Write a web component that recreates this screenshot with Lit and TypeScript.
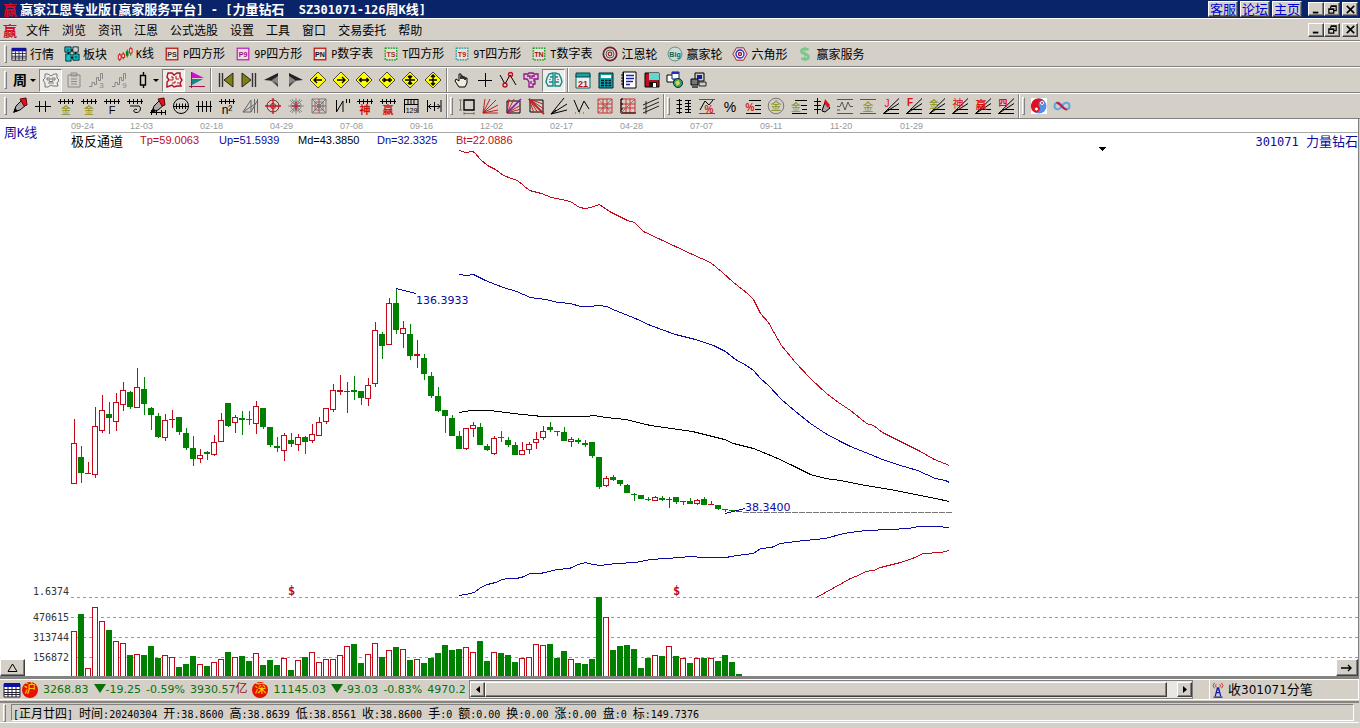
import { LitElement, html, svg, css } from "lit";
import type { SVGTemplateResult, TemplateResult } from "lit";
import { customElement } from "lit/decorators.js";
import { classMap } from "lit/directives/class-map.js";

type Art = SVGTemplateResult | SVGTemplateResult[];

/* ---------- text ---------- */

/** Splits a label so that Latin runs get the narrow fixed-width face. */
const mix = (s: string): TemplateResult[] =>
  s
    .split(/([\u3000-\u9fff]+)/)
    .filter(Boolean)
    .map((p) => (/[\u3000-\u9fff]/.test(p) ? html`<span>${p}</span>` : html`<span class="latin">${p}</span>`));

/* ---------- icon drawing helpers (18 x 18 grid) ---------- */

const ln = (d: string, c = "#000", w = 1) => svg`<path d=${d} fill="none" stroke=${c} stroke-width=${w}></path>`;
const fl = (d: string, c = "#000", s = "none") => svg`<path d=${d} fill=${c} stroke=${s}></path>`;
const ci = (x: number, y: number, r: number, c = "#000", f = "none", w = 1) =>
  svg`<circle cx=${x} cy=${y} r=${r} fill=${f} stroke=${c} stroke-width=${w}></circle>`;
const tx = (x: number, y: number, s: string, c: string, size = 10, bold = false) =>
  svg`<text x=${x} y=${y} fill=${c} font-size=${size} font-weight=${bold ? 700 : 400} text-anchor="middle"
    font-family="'Liberation Sans','Noto Sans CJK SC',sans-serif">${s}</text>`;

const rail = ln("M1 4.5H17M3.5 2V7M7.5 2V7M11.5 2V7M15.5 2V7");
const fan = ln("M1.5 16.5L17 1.5M1.5 16.5L17 6.5M1.5 16.5H17M5 12.5H17");
const pen = [
  fl("M3 15L5 9L11 3L15 8L9 13Z", "#aaa", "#000"),
  fl("M9 2L15 1L16 8L13 9Z", "#e01020", "#600"),
  fl("M2 16L4 11L7 14Z"),
];
const miniPen = [fl("M9 14L12 5L17 11L12 15Z", "#aaa", "#000"), fl("M12 2L17 8L15 11L11 6Z", "#e01020")];
const box4 = (label: string, edge: string, ink: string, dash = "none") => [
  svg`<rect x="2.5" y="2.5" width="13" height="13" fill="#e6e2da" stroke=${edge} stroke-width="1.4" stroke-dasharray=${dash}></rect>`,
  tx(9, 12.5, label, ink, 8, true),
];
const diamond = (arrow: string) => [
  fl("M9 1L17 9L9 17L1 9Z", "#ffff00", "#444"),
  ln(arrow, "#000", 1.4),
];
const grid = ln("M2 2H16V16H2ZM7 2V16M11 2V16M2 7H16M2 11H16", "#c33");
const steps = (n: string) => [
  ln("M1 15.5H4V11.5H6.5V13.5H8.5V6.5H10.5V9.5H12.5V2.5H14.5V8", "#888"),
  tx(13.5, 17, n, "#888", 8),
];

const icons: Record<string, Art> = {
  quote: [fl("M1 3H17V16H1Z", "#fff", "#223"), fl("M1 2H17V6H1Z", "#1010a0"), ln("M1 8.5H17M1 11.5H17M1 13.5H17M5 6V16M9 6V16M13 6V16", "#223")],
  blocks: [
    ["M1 1H8V7H1Z", "#10c8c8"], ["M10 1H16V7H10Z", "#d4d0c8"], ["M2 9H8V17H2Z", "#10c8c8"], ["M10 9H17V16H10Z", "#10c8c8"],
  ].map(([d, c]) => fl(d, c, "#023")).concat([fl("M3 3H6V6H3ZM12 11H15V14H12Z", "#078"), ln("M8 5H10M13 7V9M8 13H10M5 7V9", "#000", 2)]),
  kline: [ln("M3 8V17M7 7V15", "#c00"), fl("M1.5 10H4.5V15H1.5Z", "#fdd", "#c00"), fl("M5.5 9H8.5V13H5.5Z", "#fdd", "#c00"), ln("M11.5 4V13M15.5 1V11", "#0a6a0a"), fl("M10 6H13V11H10Z", "#080"), fl("M14 3H17V8H14Z", "#fdd", "#c00")],
  ps: box4("PS", "#c01010", "#333"),
  p9: box4("P9", "#c020c0", "#a0108a"),
  pn: box4("PN", "#c01010", "#111"),
  ts: box4("TS", "#00a010", "#a03020", "2 1"),
  t9: box4("T9", "#10a0a0", "#c02020", "2 1"),
  tn: box4("TN", "#00a010", "#a01010", "2 1"),
  wheel: [ci(9, 9, 7.5, "#702030", "#e8d8d8", 2), ci(9, 9, 4.5, "#305030"), ci(9, 9, 2, "#903030", "none", 1.4)],
  big: [ci(9, 9, 7.8, "#508878", "#c8dcd8"), tx(9, 12, "Big", "#206050", 8, true)],
  hexagon: [fl("M1 9L5 2H13L17 9L13 16H5Z", "#e8e0e8", "#a01020"), ci(9, 9, 4.5, "#2030c0", "#fff", 1.5), ci(9, 9, 1.7, "#a01040", "none", 1.5)],
  dollar: [ln("M13 4.5C11 2.5 5 2.5 5 6C5 9.500 13 8.500 13 12C13 15.500 7 15.500 5 13.500", "#78c888", 3), ln("M9 1V17", "#78c888", 1.4)],

  week: [tx(9, 14, "周", "#000", 14, true)],
  flower: [ln("M3 3H6L9 5L12 3H15V7L17 9L15 12L16 15H11L9 14L6 16H3V12L1 9L3 7ZM5 7H8V9H5ZM10 7H13V9H10ZM6 12H12M7 10.5H11", "#777")],
  clipboard: [ln("M3 4H15V16H3ZM6 2H12V5H6ZM6 8H12M6 10.5H12M6 13H12", "#888")],
  steps3: steps("3"),
  steps9: steps("9"),
  candle: [ln("M9.5 1V5M9.5 14V17M6.5 4.5H11.5V14H6.5Z", "#000", 1.4)],
  puzzle: [ln("M3 2H7L9 4L12 2H15V6L17 9L15 12L16 15H12L9 16L7 14L2 16V11L4 9L2 6Z", "#b01020", 1.4), ln("M6 6H8V9H5M11 5V8H14M7 12H10V10M12 12H14", "#b01020")],
  flag: [ln("M3.5 1V17M1 15.5H17", "#b01050"), fl("M4 1L16 7H4Z", "#d010c8"), fl("M4 8H15L4 14Z", "#108888")],
  first: [ln("M2.5 2V16M5.5 2V16", "#333", 1.4), fl("M16 2V16L7 9Z", "#808010", "#222")],
  last: [ln("M12.5 2V16M15.5 2V16", "#333", 1.4), fl("M2 2V16L11 9Z", "#808010", "#222")],
  prev: [fl("M15 2V16L8 10Z", "#888"), fl("M15 2L1 9H9L15 5Z", "#222"), fl("M1 9H9L15 16V13L10 10Z", "#444")],
  next: [fl("M3 2V16L10 10Z", "#888"), fl("M3 2L17 9H9L3 5Z", "#222"), fl("M17 9H9L3 16V13L8 10Z", "#444")],
  dLeft: diamond("M13 9H5M8 6L5 9L8 12"),
  dRight: diamond("M5 9H13M10 6L13 9L10 12"),
  dWide: diamond("M4 9H14M6.5 7L4.5 9L6.5 11M11.5 7L13.5 9L11.5 11"),
  dNarrow: diamond("M4 9H14M5.5 7L8 9L5.5 11M12.5 7L10 9L12.5 11"),
  dShort: diamond("M4 9H14M9 4V14M7 5L9 7.5L11 5M7 13L9 10.5L11 13"),
  dTall: diamond("M5 9H13M9 4V14M7 6L9 4L11 6M7 12L9 14L11 12"),
  hand: [fl("M6 16L2 10L3 8L6 10V3H8V8V5H10V8V6H12V9V7H14V12L12 16Z", "#eeeae0", "#000")],
  cross: ln("M9.5 2V16M2 9.5H16"),
  nodes: [ln("M1 4L6 13L11 4L17 14"), ci(6, 14, 2, "#c01020", "none", 1.4), ci(11.5, 3.5, 2, "#c01020", "none", 1.4)],
  knot: [ln("M2 3H6L7 2H11L12 3H16V8H12V10H13V13H11V16H7V11L5 8H2ZM5 5H8V8M13 5H10V8M9 10V13", "#901090", 1.3)],
  brain: [ln("M8 2L4 3L2 7L1 11L3 15H8ZM10 2L14 3L16 7L17 11L15 15H10ZM8 6H5M8 11H4M10 6H13M10 11H14M5 8V9M13 8V9", "#108888", 1.4)],
  calendar: [fl("M2 4H16V17H2Z", "#e8f0f0", "#066"), fl("M2 2H16V6H2Z", "#20a0a0", "#044"), tx(9, 15.5, "21", "#c01020", 9, true)],
  calc: [fl("M2 2H16V17H2Z", "#10a0a8", "#022"), fl("M4 4H14V7H4Z", "#fff"), ln("M4 9.5H14M4 12H14M4 14.5H14", "#012", 1.6), ln("M7.5 8V16M11 8V16", "#10a0a8")],
  notebook: [fl("M3 1H16V17H3Z", "#fff", "#000"), ln("M3.5 1V17M1 4H4M1 7H4M1 10H4M1 13H4", "#000"), ln("M6 4.5H14M6 7.5H14M6 10.5H13M6 13.5H10", "#2020a0", 1.4)],
  floppy: [fl("M2 2H16V16H2Z", "#c01020", "#000"), fl("M6 2H16V9H6Z", "#60d8d0"), fl("M6 11H14V16H6Z", "#111"), fl("M10 12H13V16H10Z", "#fff")],
  globe: [fl("M1 4H8V11H1Z", "#fff", "#000"), fl("M6 1H13V8H6Z", "#fff", "#102080"), fl("M6 1H13V3H6Z", "#2030b0"), ci(12, 12, 4.5, "#033", "#30a070"), fl("M9 11L13 9L14 13L11 15Z", "#e0d040")],
  computers: [fl("M6 2H15V10H6Z", "#ccc", "#000"), fl("M8 4H13V8H8Z", "#1020a0"), fl("M2 8H9V14H2Z", "#777", "#000"), fl("M10 11H17V15H10Z", "#ccc", "#222"), ln("M3 16H9", "#333", 1.6)],

  pen,
  cross2: ln("M1 9.5H17M5.5 4V15M11.5 4V15"),
  railGold: [rail, tx(9, 17, "金", "#909010", 10)],
  railF: [rail, tx(9, 16.5, "F", "#000", 11)],
  railSpiral: [rail, ln("M4 9H13C16 11 14 16 10 15.5C6 15 8 11 11 12.5")],
  penRuler: [...pen, ln("M1 15.5H17M2.5 13V18M7.5 13V18M12.5 13V18M16.5 13V18")],
  circleRuler: [ci(9, 9, 7.5), ln("M1 9.5H17M4.5 6.5V12M7.5 6.5V12M10.5 6.5V12M13.5 6.5V12")],
  cross4: ln("M1 9.5H17M3.5 4V15M7.5 4V15M11.5 4V15M15.5 4V15"),
  railN: [rail, tx(9, 16.5, "n²", "#000", 12)],
  triangles: [ln("M2 15L10 3V15L2 15L14 7M13.5 2V16M16.5 2V16M10 15L16 4", "#666")],
  target: [ci(9, 9, 6, "#702020"), ci(9, 9, 2.5, "#702020"), ln("M9 1V17M1 9H17", "#d01020", 1.3)],
  web: [ln("M3 3L15 15M15 3L3 15M9 1V17M1 9H17M5 2L13 16M13 2L5 16", "#888"), ci(9, 9, 5, "#788"), ln("M9 5V13M5 9H13", "#c02030", 1.4)],
  squareWeb: [ln("M2 2H16V16H2ZM5 5H13V13H5ZM2 2L16 16M16 2L2 16", "#777"), ln("M9 2V16M2 9H16", "#c04040"), fl("M7 7H11V11H7Z", "#777")],
  slope: ln("M3.5 3V15L10 4V15M13.5 2V6M16.5 2V6"),
  railShen: [rail, tx(9, 17, "神", "#d01010", 11, true)],
  railWin: [rail, tx(9, 17, "赢", "#d01010", 11, true)],
  ruler: [ln("M2 2.5H16M2 7.5H16M2.5 2V16M16 2V16M6 3V7M9 3V7M12 3V7"), tx(9.5, 15.5, "129", "#000", 7)],
  span: ln("M2.5 3V15M16 3V15M3 9.5H15M9.5 5V14M6 7L3.5 9.5L6 12M12.5 7L15 9.5L12.5 12"),

  dims: [ln("M6 3H16V13H6Z", "#000", 1.4), ln("M2.5 3V13M1 3H4M1 13H4M6 16.5H16M6 15V18M16 15V18", "#777")],
  redFan: ln("M2 16L4 2M2 16L9 2M2 16L15 3M2 16L17 8M2 16L17 13M2 16H17", "#c02020"),
  boxFan: [ln("M3 4H16V16H3Z"), ln("M3 16L5 2M3 16L10 2M3 16L17 8M3 16L17 12", "#c02020"), ln("M3 16L17 2", "#8020a0", 1.6)],
  boxFan2: [ln("M3 3H16V15H3Z"), ln("M2 2L16 7M2 2L17 12M2 2L7 16M2 2L11 16", "#c02020"), ln("M2 2L17 17", "#c02020", 1.8)],
  blackFan: ln("M1 17L14 1M1 17L17 7M1 17L17 13M1 17L6 13"),
  zigzag: [ln("M1 3L6 15L11 4L16 12"), ln("M2 16H3M6 16H7M10 16H11", "#555")],
  redGrid: [ln("M2 2L16 16M16 2L2 16", "#888"), grid],
  blackGrid: [grid, ln("M2 2V16H17M2 2H4M2 7H4M2 12H4"), ln("M2 16L16 2", "#777")],
  channels: ln("M1 8L17 1M1 12L17 5M1 16L17 9M4 4V17", "#222"),

  levels: ln("M4.5 2V17M1.5 3.5H7M1.5 7.5H7M1.5 11.5H7M1.5 15.5H7M10 3.5H16M10 6.5H16M10 9.5H16M10 12.5H16M10 15.5H16M13.5 3V16"),
  percentCurve: [ln("M1 2.5H17M1 16.5H17", "#d02020"), ln("M2 13L7 4L11 8L15 3", "#000"), tx(11, 15.5, "%", "#d02020", 10, true)],
  percent: tx(9, 14.5, "%", "#000", 14),
  percentLines: [ln("M5 3.5H17M11 8.5H17M11 12.5H17M2 16.5H17"), tx(6, 14, "%", "#d02020", 10, true)],
  goldCircle: [ci(9, 9, 7.8, "#777"), tx(9, 13, "金", "#909010", 11)],
  goldLines: [ln("M5 3.5H17M11 8.5H17M12 12.5H17M2 16.5H17"), tx(6, 14, "金", "#909010", 10)],
  penLevels: [ln("M4.5 1V17M1 4.5H8M1 8.5H8M1 12.5H8"), ...miniPen],
  wave: [ln("M1 2.5H17M1 16.5H17", "#d02020"), ln("M1 9.5H4L6 5L9 13L12 5L14 9.5H17M1 13H4", "#555")],
  goldRed: [ln("M1 2.5H17M1 16.5H17", "#d02020"), tx(9, 14, "金", "#909010", 11)],
  fanJ: [fan, tx(5, 10, "J", "#e01010", 10)],
  fanF: [fan, tx(5, 9, "F", "#e01010", 10, true)],
  fanGold: [fan, tx(6, 11, "金", "#909010", 10)],
  fanShen: [fan, tx(7, 11, "神", "#e01010", 11)],
  fanWin: [fan, tx(7, 12, "赢", "#e01010", 11, true)],
  fanFour: [fan, tx(6, 9, "四", "#e01010", 9, true)],
  yinyang: [fl("M1 1H17V17H1Z", "#fff"), ci(9, 9, 7.5, "none", "#5090e8"), fl("M9 1.5A7.5 7.5 0 0 0 4 15A4 4 0 0 0 9 9A4 4 0 0 1 14 3.5A8 8 0 0 0 9 1.5Z", "#e01020"), ci(6.5, 12, 2, "#e01020", "#fff"), ci(12, 6, 1.5, "#fff", "#e01020")],
  infinity: [ln("M9 9C6 4 1.5 5.5 1.5 9S6 14 9 9", "#60a8e0", 2), ln("M9 9C12 14 16.5 12.5 16.5 9S12 4 9 9", "#60a8e0", 2), ln("M3.5 6C7 5 10 13 14 12.5", "#c02040", 2.2)],
  tower: [ln("M4 17H14M6 16L8.5 6M12 16L9.5 6M7 12H11M8 9H10", "#1818a0", 1.4), ln("M5 1Q2 4 5 7M13 1Q16 4 13 7M7 2.5Q5.5 4 7 6M11 2.5Q12.5 4 11 6", "#c02020")],
  minimize: ln("M3 14H12", "#000", 3),
  restore: [ln("M6 3H15V11H11M6 4V7M6 4H15", "#000", 2), ln("M3 8H11V15H3ZM3 9H11", "#000", 2)],
  close: ln("M3 3L15 15M15 3L3 15", "#000", 2.6),
};

const icon = (name: string, size = "") => html`<svg class="icon ${size}" viewBox="0 0 18 18" aria-hidden="true">${icons[name]}</svg>`;

/* ---------- shared look ---------- */

const base = css`
  * {
    box-sizing: border-box;
  }
  button,
  a {
    font: inherit;
    color: inherit;
    background: none;
    border: 0;
    padding: 0;
    margin: 0;
    text-decoration: none;
    white-space: pre;
  }
  .latin {
    font-family: "DejaVu Sans Mono", monospace;
    font-size: 10px;
  }
  .icon {
    display: block;
    width: 18px;
    height: 18px;
    flex: none;
  }
  .icon.s16 {
    width: 16px;
    height: 16px;
  }
  .icon.s10 {
    width: 11px;
    height: 11px;
  }
  .raised {
    background: #d4d0c8;
    border: 1px solid;
    border-color: #fff #404040 #404040 #fff;
    box-shadow: inset -1px -1px 0 #808080;
  }
`;

/* ---------- chart data ---------- */

const FIRST_X = 71;
const PITCH = 7;
const TOP = 119;

/** rise flag, high, body top, body bottom, low, volume top */
type Bar = [number, number, number, number, number, number];
const bars: Bar[] = [
  [1, 419, 443, 484, 484, 631], [0, 446, 457, 473, 483, 614], [1, 462, 473, 473, 473, 668], [1, 407, 426, 475, 478, 607],
  [1, 395, 410, 431, 433, 621], [0, 402, 414, 418, 434, 630], [1, 393, 402, 422, 431, 641], [1, 382, 390, 405, 411, 643],
  [0, 391, 392, 407, 409, 655], [1, 368, 387, 408, 408, 654], [0, 377, 389, 404, 415, 655], [0, 407, 408, 415, 430, 646],
  [0, 413, 416, 437, 438, 658], [1, 414, 420, 438, 441, 655], [1, 410, 419, 419, 428, 657], [0, 417, 417, 432, 435, 667],
  [0, 428, 433, 448, 450, 664], [0, 436, 448, 459, 466, 656], [1, 449, 455, 459, 463, 664], [0, 451, 452, 454, 460, 666],
  [1, 435, 442, 455, 456, 662], [1, 413, 420, 442, 442, 659], [0, 403, 403, 426, 427, 652], [1, 415, 417, 423, 433, 657],
  [0, 411, 418, 420, 435, 656], [0, 411, 419, 419, 425, 661], [1, 401, 406, 424, 434, 653], [0, 408, 408, 427, 429, 665],
  [0, 427, 427, 445, 447, 660], [0, 437, 446, 448, 452, 665], [1, 433, 435, 451, 461, 658], [0, 433, 440, 444, 447, 670],
  [1, 434, 437, 445, 451, 660], [0, 436, 437, 442, 454, 657], [1, 424, 434, 441, 443, 652], [1, 417, 422, 436, 436, 662],
  [1, 408, 408, 422, 424, 659], [1, 384, 390, 410, 412, 659], [1, 375, 390, 392, 395, 655], [1, 382, 391, 391, 413, 646],
  [0, 376, 390, 392, 400, 644], [0, 391, 391, 398, 405, 663], [1, 378, 385, 399, 406, 654], [1, 322, 330, 384, 387, 643],
  [0, 332, 334, 346, 359, 657], [1, 298, 303, 345, 345, 650], [0, 288, 303, 330, 334, 647], [1, 321, 328, 334, 348, 649],
  [0, 324, 334, 356, 360, 660], [1, 340, 354, 356, 368, 659], [0, 354, 358, 374, 380, 663], [0, 372, 376, 396, 398, 658],
  [0, 387, 396, 411, 412, 653], [0, 410, 410, 416, 433, 645], [0, 415, 418, 436, 436, 650], [0, 431, 436, 449, 449, 649],
  [1, 428, 428, 449, 450, 647], [1, 422, 425, 429, 437, 652], [0, 423, 427, 445, 445, 641], [0, 444, 446, 450, 451, 661],
  [1, 436, 438, 454, 455, 652], [0, 431, 437, 437, 442, 653], [0, 437, 440, 445, 447, 655], [0, 442, 445, 455, 455, 662],
  [1, 442, 450, 455, 455, 658], [1, 442, 444, 450, 454, 657], [1, 432, 439, 443, 449, 644], [1, 426, 431, 438, 440, 645],
  [0, 422, 427, 430, 432, 644], [0, 431, 431, 431, 436, 658], [0, 427, 432, 441, 441, 651], [1, 437, 439, 442, 447, 659],
  [0, 438, 440, 442, 444, 663], [0, 440, 443, 445, 447, 664], [0, 442, 442, 456, 458, 659], [0, 457, 457, 487, 489, 597],
  [1, 476, 478, 486, 487, 617], [0, 475, 477, 480, 481, 650], [0, 480, 480, 484, 486, 646], [0, 484, 485, 493, 493, 645],
  [0, 493, 494, 494, 501, 649], [0, 495, 495, 499, 499, 668], [0, 497, 499, 499, 501, 658], [1, 496, 497, 501, 501, 655],
  [0, 496, 498, 500, 501, 656], [1, 497, 499, 499, 508, 646], [0, 497, 497, 502, 504, 656], [1, 501, 501, 501, 505, 658],
  [0, 498, 501, 504, 504, 663], [1, 499, 500, 504, 505, 658], [0, 497, 499, 505, 505, 658], [1, 501, 504, 504, 505, 658],
  [0, 505, 505, 509, 510, 661], [0, 509, 509, 509, 512, 655], [0, 510, 510, 510, 511, 662], [0, 511, 511, 511, 511, 674],
];

const RED = "#c00a1a";
const BLUE = "#0a0aa0";

const bands: { color: string; points: string }[] = [
  { color: RED, points: "459,150 465,152 472,151 474,152 480,159 487,165 495,169 503,175 511,178 517,180 529,190 541,193 551,197 561,199 570,201 579,207 585,208 590,207 599,204 609,211 627,220 634,222 643,231 660,239 675,246 692,254 710,262 722,272 733,282 742,289 747,293 753,299 760,313 768,322 774,333 781,345 795,362 810,378 826,393 838,402 850,410 860,418 866,423 873,425 882,432 900,441 918,450 934,459 949,465" },
  { color: BLUE, points: "459,274 466,275 473,274 485,280 495,284 503,287 516,291 530,297 545,299 558,302 570,303 580,306 588,306 599,305 606,306 615,310 635,318 650,325 675,334 695,339 713,345 725,351 735,359 746,365 753,370 760,378 768,385 781,399 795,411 810,423 825,433 840,441 850,446 870,454 882,459 900,465 917,470 935,478 945,480 949,482" },
  { color: "#000", points: "459,412 470,410 490,410 505,412 522,414 542,416 586,416 594,415 605,417 625,419 650,425 692,431 712,436 724,439 733,443 753,448 775,457 792,465 810,474 825,478 840,480 865,485 890,489 920,495 935,498 949,501" },
  { color: BLUE, points: "459,595 465,594 474,592 480,587 487,584 495,582 502,579 507,578 516,578 524,576 529,573 540,573 557,569 569,568 578,564 585,562 592,564 600,565 616,563 635,562 650,559 665,558 680,557 690,556 703,557 725,557 737,555 753,553 760,548 771,547 780,543 795,541 825,538 843,533 865,530 890,529 908,528 918,526 935,526 949,527" },
  { color: RED, points: "816,597 834,587 850,578 860,574 865,571 873,570 880,567 900,562 912,558 923,553 940,552 949,550" },
];

const levels: [number, string][] = [[597, "1.6374"], [617, "470615"], [637, "313744"], [657, "156872"]];
const dates = ["09-24", "12-03", "02-18", "04-29", "07-08", "09-16", "12-02", "02-17", "04-28", "07-07", "09-11", "11-20", "01-29"];
const legend: [string, string][] = [
  ["Tp=59.0063", "red"], ["Up=51.5939", "blue"], ["Md=43.3850", "black"], ["Dn=32.3325", "blue"], ["Bt=22.0886", "red"],
];

@customElement("kline-chart")
class KlineChart extends LitElement {
  static styles = [
    base,
    css`
      :host {
        display: block;
        position: relative;
        background: #fff;
        font: 13px/16px "Noto Sans CJK SC", sans-serif;
        border-right: 1px solid #808080;
        border-bottom: 3px solid #868482;
        overflow: hidden;
      }
      .plot {
        position: absolute;
        inset: 0;
        width: 100%;
        height: 100%;
      }
      .head {
        display: grid;
        grid-template-columns: 67px 1fr;
        padding-left: 4px;
      }
      .latin {
        font-size: 12px;
        line-height: 1;
      }
      .name {
        color: #0a0aa0;
        padding-top: 5px;
      }
      .dates {
        display: flex;
        height: 14px;
        border-bottom: 1px solid #a8a8a8;
        font: 9px/15px "Liberation Sans", sans-serif;
        color: #999;
      }
      .dates span {
        width: 70px;
      }
      .dates span:first-child {
        width: 59px;
      }
      .legend {
        display: flex;
        align-items: center;
        height: 15px;
        line-height: 15px;
      }
      .title {
        width: 69px;
      }
      .value {
        width: 79px;
        font: 11px/15px "Liberation Sans", sans-serif;
      }
      .red {
        color: #c00a1a;
      }
      .blue {
        color: #0a0aa0;
      }
      .stock {
        margin-left: auto;
        color: #0a0aa0;
        white-space: pre;
      }
      .mono {
        font: 10px "DejaVu Sans Mono", monospace;
        fill: #333;
      }
      .price {
        font: 11px "DejaVu Sans", sans-serif;
        fill: #0a0aa0;
      }
      .event {
        font: 700 12px "DejaVu Sans Mono", monospace;
        fill: #c00a1a;
      }
      .corner {
        position: absolute;
        bottom: 0;
        height: 17px;
        display: grid;
        place-items: center;
      }
      .up {
        left: 0;
        width: 25px;
      }
      .forward {
        right: 0;
        width: 22px;
      }
    `,
  ];

  private bar([rise, high, top, bottom, low, volume]: Bar, i: number) {
    const x = FIRST_X + i * PITCH;
    const ink = rise ? RED : "#008000";
    const flat = bottom - top < 1;
    const hollow = rise && bottom - top > 2;
    return svg`
      ${high < top ? svg`<rect x=${x + 3} y=${high} width="1" height=${top - high} fill=${ink}></rect>` : null}
      ${low > bottom ? svg`<rect x=${x + 3} y=${bottom} width="1" height=${low - bottom} fill=${ink}></rect>` : null}
      ${hollow
        ? svg`<rect x=${x + 0.5} y=${top + 0.5} width="5" height=${bottom - top - 1} fill="#fff" stroke=${ink}></rect>`
        : svg`<rect x=${x} y=${top} width="6" height=${flat ? 1 : bottom - top} fill=${ink}></rect>`}
      ${rise
        ? svg`<rect x=${x + 0.5} y=${volume + 0.5} width="5" height=${676 - volume} fill="#fff" stroke=${ink}></rect>`
        : svg`<rect x=${x} y=${volume} width="6" height=${677 - volume} fill=${ink}></rect>`}
    `;
  }

  render() {
    return html`
      <svg class="plot" role="img" aria-label="周K线">
        <g transform="translate(0 ${-TOP})">
          <g shape-rendering="crispEdges">
            ${levels.map(([y]) => svg`<line x1="71" x2="100%" y1=${y + 0.5} y2=${y + 0.5} stroke="#999" stroke-dasharray="3 3"></line>`)}
            ${bars.map((b, i) => this.bar(b, i))}
            ${bands.map((b) => svg`<polyline points=${b.points} transform="translate(0.5 0.5)" fill="none" stroke=${b.color}></polyline>`)}
            <line x1="743" x2="952" y1="512.5" y2="512.5" stroke="#777" stroke-dasharray="6 1"></line>
            <path d="M396 288.5L416 293.5M725 513.5L745 508.5" stroke=${BLUE}></path>
            <path d="M1099 147H1106L1102.5 151Z"></path>
          </g>
          ${levels.map(([y, label]) => svg`<text class="mono" text-anchor="end" x="69" y=${y === 597 ? 595 : y + 4}>${label}</text>`)}
          <text class="price" x="416" y="304">136.3933</text>
          <text class="price" x="745" y="511">38.3400</text>
          <text class="event" x="288" y="595">$</text>
          <text class="event" x="673" y="595">$</text>
        </g>
      </svg>
      <div class="head">
        <div class="name">${mix("周K线")}</div>
        <div>
          <div class="dates">${dates.map((d) => html`<span>${d}</span>`)}</div>
          <div class="legend">
            <span class="title">极反通道</span>
            ${legend.map(([t, c]) => html`<span class="value ${c}">${t}</span>`)}
            <span class="stock">${mix("301071 力量钻石")}</span>
          </div>
        </div>
      </div>
      <button class="corner up raised" aria-label="展开">
        <svg width="11" height="9"><path d="M1 8.5H10L5.5 1Z" fill="none" stroke="#000"></path></svg>
      </button>
      <button class="corner forward raised" aria-label="前进">
        <svg width="12" height="8"><path d="M0 4H10M7 1L10 4L7 7" fill="none" stroke="#000" stroke-width="1.4"></path></svg>
      </button>
    `;
  }
}

/* ---------- application shell ---------- */

const menus = ["文件", "浏览", "资讯", "江恩", "公式选股", "设置", "工具", "窗口", "交易委托", "帮助"];
const features: [string, string][] = [
  ["quote", "行情"], ["blocks", "板块"], ["kline", "K线"], ["ps", "P四方形"], ["p9", "9P四方形"], ["pn", "P数字表"], ["ts", "T四方形"],
  ["t9", "9T四方形"], ["tn", "T数字表"], ["wheel", "江恩轮"], ["big", "赢家轮"], ["hexagon", "六角形"], ["dollar", "赢家服务"],
];
const viewTools = [
  ["week", "flower", "clipboard", "steps3", "steps9", "candle", "puzzle", "flag"],
  ["first", "last", "prev", "next", "dLeft", "dRight", "dWide", "dNarrow", "dShort", "dTall"],
  ["hand", "cross", "nodes", "knot", "brain"],
  ["calendar", "calc", "notebook", "floppy", "globe", "computers"],
];
const drawTools = [
  ["pen", "cross2", "railGold", "railGold", "railF", "railSpiral", "penRuler", "circleRuler", "cross4", "railN", "triangles", "target", "web", "squareWeb", "slope", "railShen", "railWin", "ruler", "span"],
  ["dims", "redFan", "boxFan", "boxFan2", "blackFan", "zigzag", "redGrid", "blackGrid", "channels"],
  ["levels", "percentCurve", "percent", "percentLines", "goldCircle", "goldLines", "penLevels", "wave", "goldRed", "fanJ", "fanF", "fanGold", "fanShen", "fanWin", "fanFour"],
  ["yinyang", "infinity"],
];
const pressed = new Set(["flower", "puzzle", "brain"]);
const dropdowns = new Set(["week", "candle"]);
const indices: { mark: string; level: string; change: string; percent: string; turnover: string; unit: string }[] = [
  { mark: "沪", level: "3268.83", change: "-19.25", percent: "-0.59%", turnover: "3930.57", unit: "亿" },
  { mark: "深", level: "11145.03", change: "-93.03", percent: "-0.83%", turnover: "4970.2", unit: "" },
];

@customElement("app-root")
class AppRoot extends LitElement {
  static styles = [
    base,
    css`
      :host {
        display: flex;
        flex-direction: column;
        height: 100vh;
        background: #d4d0c8;
        color: #000;
        font: 12px/16px "Noto Sans CJK SC", sans-serif;
        overflow: hidden;
      }
      header {
        display: flex;
        align-items: center;
        height: 18px;
        flex: none;
        padding: 0 2px 0 3px;
        background: #0a246a;
        color: #fff;
      }
      .logo {
        width: 17px;
        font-size: 14px;
        line-height: 18px;
        font-weight: 700;
        color: #d01028;
      }
      h1 {
        margin: 0;
        flex: 1;
        font-size: 13px;
        line-height: 18px;
        white-space: pre;
      }
      h1 .latin {
        font-size: 12px;
      }
      .links {
        display: flex;
        gap: 2px;
        margin-right: 6px;
      }
      .links a {
        width: 30px;
        height: 16px;
        line-height: 14px;
        font-size: 13px;
        text-align: center;
        color: #0000d0;
      }
      .window {
        display: flex;
      }
      .window button {
        width: 16px;
        height: 14px;
        display: grid;
        place-items: center;
      }
      .window button:last-child {
        margin-left: 2px;
      }
      .bar {
        display: flex;
        align-items: center;
        flex: none;
        height: 26px;
        border-top: 1px solid #fff;
        border-bottom: 1px solid #808080;
      }
      nav.bar {
        height: 23px;
        padding: 0 2px 0 3px;
      }
      nav .window {
        margin-left: auto;
      }
      nav .item {
        padding: 0 6px;
      }
      .grip {
        width: 3px;
        height: 18px;
        flex: none;
        border: 1px solid;
        border-color: #fff #808080 #808080 #fff;
      }
      .features {
        gap: 10px;
        padding-left: 4px;
      }
      .features .grip {
        margin-right: -6px;
      }
      .feature {
        display: flex;
        align-items: center;
        gap: 3px;
      }
      .tools {
        padding-left: 4px;
      }
      .group {
        display: flex;
        align-items: center;
      }
      .tools > .grip {
        margin-right: 1px;
      }
      .tool {
        width: 23px;
        height: 23px;
        display: flex;
        align-items: center;
        justify-content: center;
      }
      .tool.drop {
        width: 31px;
        gap: 1px;
      }
      .tool.on {
        border: 1px solid;
        border-color: #808080 #fff #fff #808080;
        background: #efede9;
      }
      .arrow {
        border: 3px solid transparent;
        border-top-color: #000;
        border-bottom-width: 0;
      }
      .sep {
        width: 2px;
        height: 24px;
        margin: 0 2px;
        border-left: 1px solid #808080;
        border-right: 1px solid #fff;
      }
      .draw .sep {
        margin: 0 2px 0 1px;
      }
      .draw .group .grip {
        margin-right: 2px;
      }
      kline-chart {
        flex: 1;
        min-height: 0;
        margin-right: 1px;
      }
      .status {
        display: flex;
        align-items: stretch;
        height: 21px;
        flex: none;
        margin-right: 1px;
        border-top: 1px solid #fff;
        border-bottom: 1px solid #fff;
        font: 11px/19px "DejaVu Sans", "Noto Sans CJK SC", sans-serif;
      }
      .ticker {
        display: flex;
        align-items: center;
        width: 469px;
        gap: 1px;
        padding-left: 3px;
        white-space: pre;
        color: #0a700a;
        flex: none;
      }
      .index {
        display: flex;
        align-items: center;
        gap: 5px;
        padding-right: 4px;
      }
      .market {
        width: 16px;
        height: 16px;
        flex: none;
        border-radius: 50%;
        background: #e81000;
        color: #ffe000;
        font-size: 12px;
        line-height: 15px;
        text-align: center;
      }
      .down {
        display: inline-block;
        border: 6px solid transparent;
        border-top: 9px solid #0a700a;
        border-bottom: 0;
      }
      .yi {
        color: #901010;
        font-size: 12px;
      }
      .scroll {
        flex: 1;
        display: flex;
        align-items: stretch;
        border: 1px solid #808080;
        padding: 1px 0;
        background: #e9e7e3;
      }
      .scroll button {
        width: 15px;
        display: grid;
        place-items: center;
      }
      .thumb {
        flex: 1;
        margin-right: 10px;
      }
      .tick {
        display: flex;
        align-items: center;
        gap: 2px;
        width: 150px;
        margin-left: 16px;
        border-left: 1px solid #fff;
        border-right: 1px solid #fff;
        font-size: 13px;
        white-space: pre;
      }
      .tick .latin {
        font: 12px/19px "DejaVu Sans", sans-serif;
      }
      .info {
        display: flex;
        align-items: center;
        height: 22px;
        flex: none;
        margin: 1px 1px 5px 0;
        padding-left: 3px;
        border-top: 2px solid #868482;
        border-bottom: 1px solid #fff;
      }
      .info p {
        margin: 0 5px;
        padding-left: 1px;
        flex: 1;
        height: 17px;
        line-height: 15px;
        border: 1px solid;
        border-color: #808080 #fff #fff #808080;
        white-space: pre;
      }
    `,
  ];

  private windowButtons() {
    return html`<div class="window">
      <button class="raised" aria-label="最小化">${icon("minimize", "s10")}</button>
      <button class="raised" aria-label="还原">${icon("restore", "s10")}</button>
      <button class="raised" aria-label="关闭">${icon("close", "s10")}</button>
    </div>`;
  }

  private tool(name: string) {
    const drop = dropdowns.has(name);
    return html`<button class=${classMap({ tool: true, on: pressed.has(name), drop })} aria-label=${name}>
      ${icon(name)}${drop ? html`<span class="arrow"></span>` : null}
    </button>`;
  }

  private groups(list: string[][], grips = false) {
    return list.map(
      (names, i) => html`<div class="group">
        ${i ? html`<span class="sep"></span>` : null}${i && grips ? html`<span class="grip"></span>` : null}${names.map((n) => this.tool(n))}
      </div>`
    );
  }

  render() {
    return html`
      <header>
        <span class="logo">赢</span>
        <h1>${mix("赢家江恩专业版[赢家服务平台] - [力量钻石  SZ301071-126周K线]")}</h1>
        <div class="links">
          ${["客服", "论坛", "主页"].map((t) => html`<a class="raised" href="#">${t}</a>`)}
        </div>
        ${this.windowButtons()}
      </header>
      <nav class="bar">
        <span class="logo">赢</span>
        ${menus.map((m) => html`<button class="item">${m}</button>`)}
        ${this.windowButtons()}
      </nav>
      <div class="bar features">
        <span class="grip"></span>
        ${features.map(([i, t]) => html`<button class="feature">${icon(i, "s16")}<span>${mix(t)}</span></button>`)}
      </div>
      <div class="bar tools"><span class="grip"></span>${this.groups(viewTools)}</div>
      <div class="bar tools draw"><span class="grip"></span>${this.groups(drawTools, true)}</div>
      <kline-chart></kline-chart>
      <div class="status">
        <div class="ticker">
          ${icon("quote")}
          ${indices.map(
            (x) => html`<div class="index">
              <span class="market">${x.mark}</span>
              <span>${x.level}</span>
              <span><i class="down"></i>${x.change}</span>
              <span>${x.percent}</span>
              <span>${x.turnover}<span class="yi">${x.unit}</span></span>
            </div>`
          )}
        </div>
        <div class="scroll">
          <button class="raised" aria-label="向左"><svg width="4" height="7"><path d="M4 0V7L0 3.5Z"></path></svg></button>
          <div class="thumb raised"></div>
          <button class="raised" aria-label="向右"><svg width="4" height="7"><path d="M0 0V7L4 3.5Z"></path></svg></button>
        </div>
        <div class="tick">${icon("tower", "s16")}<span>${mix("收301071分笔")}</span></div>
      </div>
      <div class="info">
        <span class="grip"></span>
        <p>${mix("[正月廿四] 时间:20240304 开:38.8600 高:38.8639 低:38.8561 收:38.8600 手:0 额:0.00 换:0.00 涨:0.00 盘:0 标:149.7376")}</p>
      </div>
    `;
  }
}
